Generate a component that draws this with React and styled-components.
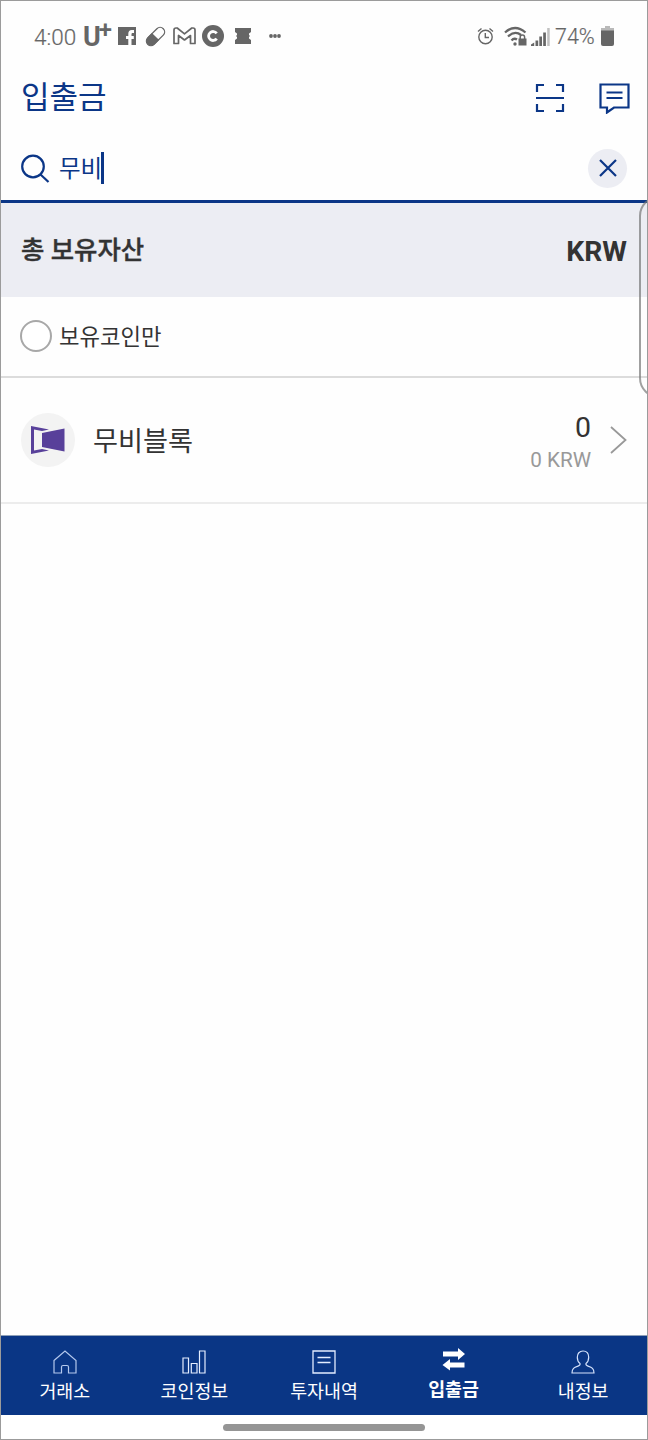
import styled, { createGlobalStyle, css } from 'styled-components';
import { useState } from 'react';

const GlobalStyle = createGlobalStyle`
  * {
    box-sizing: border-box;
  }

  body {
    margin: 0;
    background: #fff;
    font-family: Roboto, 'Noto Sans CJK KR', sans-serif;
  }
`;

const Screen = styled.div`
  position: relative;
  display: flex;
  flex-direction: column;
  width: 648px;
  height: 1440px;
  border: 1px solid #9b9b9b;
  background: #fefefe;
  color: #333;
  overflow: hidden;

  svg {
    display: block;
    flex: none;
  }
`;

const StatusBar = styled.div`
  display: flex;
  justify-content: space-between;
  height: 70px;
  padding: 0 33px 0 33px;
  color: #666;
`;

const StatusGroup = styled.div`
  display: flex;
  align-items: center;
  height: 70px;
`;

const StatusSlot = styled.span`
  display: flex;
  margin-left: ${p => p.$gap}px;
`;

const StatusText = styled.span`
  width: ${p => p.$width}px;
  font-size: ${p => p.$size || 22.5}px;
  font-weight: 300;
  line-height: 26px;
  padding-top: 2px;
  white-space: nowrap;
  -webkit-text-stroke: 0.2px currentColor;
`;

const Carrier = styled.span`
  display: flex;
  width: 29px;
  height: 30px;
  margin-left: 6px;
  font-size: 27px;
  font-weight: 700;
  line-height: 32px;

  sup {
    font-size: 24px;
    font-weight: 600;
    line-height: 18px;
    margin-left: -2px;
  }
`;

const Header = styled.header`
  display: flex;
  align-items: center;
  justify-content: space-between;
  height: 60px;
  padding: 0 17px 6px 20px;
  color: #0b3687;
`;

const Title = styled.h1`
  margin: 0;
  font-size: 31px;
  font-weight: 400;
  line-height: 44px;
`;

const HeaderIcons = styled.div`
  display: flex;
  align-items: center;
  gap: 34px;
`;

const SearchBar = styled.div`
  display: flex;
  align-items: center;
  height: 72px;
  padding: 5px 20px 0 20px;
  border-bottom: 3px solid #0b3687;
  color: #0b3687;
`;

const SearchText = styled.div`
  flex: 1;
  display: flex;
  align-items: center;
  margin-left: 9px;
  font-size: 23.5px;
  line-height: 34px;
`;

const Query = styled.span`
  padding-top: 2px;
`;

const Caret = styled.i`
  width: 3px;
  height: 32px;
  margin-left: -1px;
  background: #0b3687;
`;

const ClearButton = styled.button`
  display: flex;
  align-items: center;
  justify-content: center;
  width: 39px;
  height: 39px;
  padding: 0;
  border: 0;
  border-radius: 50%;
  background: #ecedf3;
  color: #0b3687;
`;

const Summary = styled.section`
  display: flex;
  align-items: center;
  justify-content: space-between;
  height: 94px;
  padding: 0 20px;
  background: #ecedf3;
  font-weight: 700;
`;

const SummaryLabel = styled.span`
  padding-bottom: 4px;
  font-size: 25.4px;
  font-weight: 500;
  -webkit-text-stroke: 0.4px currentColor;
`;

const SummaryUnit = styled.span`
  padding-top: 2px;
  font-size: 28.2px;
`;

const Filter = styled.label`
  display: flex;
  align-items: center;
  height: 81px;
  padding: 0 19px 2px 19px;
  gap: 7px;
  border-bottom: 2px solid #dcdcdc;
  font-size: 22.3px;
`;

const FilterText = styled.span`
  padding-bottom: 1px;
`;

const Radio = styled.span`
  width: 32px;
  height: 32px;
  border: 2px solid #a8a8a8;
  border-radius: 50%;
  background: #fff;
`;

const CoinRow = styled.div`
  display: flex;
  align-items: center;
  height: 126px;
  padding: 0 20px 0 19.5px;
  border-bottom: 2px solid #ececec;
`;

const CoinLogo = styled.div`
  display: flex;
  align-items: center;
  justify-content: center;
  width: 54px;
  height: 54px;
  border-radius: 50%;
  background: #f3f3f3;
`;

const CoinName = styled.span`
  flex: 1;
  margin-left: 18.5px;
  padding-bottom: 2px;
  font-size: 27.2px;
`;

const Amounts = styled.div`
  display: flex;
  flex-direction: column;
  align-items: flex-end;
  margin-right: 19px;
  padding-top: 6px;
`;

const Amount = styled.span`
  font-size: 28.5px;
  line-height: 33px;
`;

const Converted = styled.span`
  font-size: 20.7px;
  line-height: 32px;
  color: #999;
`;

const Content = styled.main`
  flex: 1;
`;

const TabBar = styled.nav`
  display: flex;
  height: 80px;
  margin: 0 -1px;
  border-top: 1px solid #8ea0b8;
  background: #0a3685;
`;

const Tab = styled.button`
  flex: 1;
  display: flex;
  flex-direction: column;
  align-items: center;
  gap: 4px;
  padding: 14px 0 0;
  border: 0;
  background: none;
  color: #fff;
  font-family: inherit;
  font-size: 18.4px;
  line-height: 28px;

  ${p => p.$active && css`
    padding-top: 12px;
    font-weight: 700;
  `}
`;

const HomeArea = styled.div`
  display: flex;
  justify-content: center;
  height: 24px;
  padding-top: 9px;
  background: #fff;
`;

const HomePill = styled.div`
  width: 202px;
  height: 7px;
  border-radius: 4px;
  background: #959595;
`;

/* edge panel handle, lies over the right side of the page */
const EdgeHandle = styled.div`
  position: absolute;
  top: 195px;
  right: -33px;
  width: 41px;
  height: 202px;
  border: 2px solid rgba(120, 120, 120, 0.7);
  border-radius: 20px;
`;

const FacebookIcon = () => (
  <svg width="18" height="18" viewBox="0 0 18 18" fill="currentColor">
    <path fillRule="evenodd" d="M0 0h18v18h-4.500v-6h2.300V9h-2.300V7.300c0-.8.4-1.200 1.200-1.200h1.300v-3h-2.200C11.500 3.100 10.300 4.500 10.300 6.800V9H8v3h2.300v6H0z" />
  </svg>
);

const PillIcon = () => (
  <svg width="21" height="21" viewBox="0 0 21 21">
    <g transform="rotate(-45 10.5 10.5)">
      <rect x="-0.5" y="6" width="22" height="9" rx="4.500" fill="none" stroke="currentColor" strokeWidth="1.300" />
      <path d="M10.500 5.400v10.200H4.500a5.100 5.100 0 0 1 0-10.200z" fill="currentColor" />
    </g>
  </svg>
);

const MailIcon = () => (
  <svg width="23" height="18" viewBox="0 0 23 18" fill="none" stroke="currentColor" strokeWidth="1.700" strokeLinejoin="round">
    <path d="M1 3Q1 1 3 1h1.200L11.500 6.800 18.800 1H20q2 0 2 2v13.500h-4.500V8.500L11.500 13 5.500 8.500v8H1z" />
  </svg>
);

const CoinAppIcon = () => (
  <svg width="22" height="22" viewBox="0 0 22 22">
    <circle cx="11" cy="11" r="11" fill="currentColor" />
    <path d="M14.700 8.300a4.500 4.500 0 1 0 0 5.400" fill="none" stroke="#fff" strokeWidth="2.800" />
  </svg>
);

const TicketIcon = () => (
  <svg width="16" height="16" viewBox="0 0 16 16" fill="currentColor">
    <path d="M0 0h16v4l-2 1.500v1.500l1 1-1 1v1.500l2 1.500v4H0v-4l2-1.500V9L1 8l1-1V5.500L0 4z" />
  </svg>
);

const DotsIcon = () => (
  <svg width="12" height="6" viewBox="0 0 12 6" fill="currentColor">
    <circle cx="2" cy="3" r="1.900" />
    <circle cx="6" cy="3" r="1.900" />
    <circle cx="10" cy="3" r="1.900" />
  </svg>
);

const AlarmIcon = () => (
  <svg width="17" height="18" viewBox="0 0 17 18" fill="none" stroke="currentColor" strokeWidth="1.400">
    <circle cx="8.500" cy="10" r="6.700" />
    <path d="M8.300 6v4.500h3.700M1 4.500 4.500 1.500M16 4.500 12.500 1.500" />
  </svg>
);

const WifiIcon = () => (
  <svg width="23" height="20" viewBox="0 0 23 20" fill="none" stroke="currentColor" strokeWidth="2.300">
    <path d="M1 6.500Q11 -2.500 21.500 6.500M4 10.500Q11 4 17 9M7.500 14.500Q10 11.500 13 13.500" />
    <circle cx="11" cy="18" r="1.700" fill="currentColor" stroke="none" />
    <rect x="14.500" y="12.500" width="8" height="7" fill="currentColor" stroke="none" />
    <path d="M16.200 13v-1.800a2.200 2.200 0 0 1 4.400 0V13" strokeWidth="1.500" />
  </svg>
);

const SignalIcon = () => (
  <svg width="19" height="19" viewBox="0 0 19 19" fill="currentColor">
    <path d="M0 19v-1.500l3.200-2V19zM4.500 13.500h2.700V19H4.500zM8.300 9.500H11V19H8.300zM12.200 5.500h2.700V19h-2.700z" />
    <path d="M16.200 1h2.500v18h-2.500z" opacity="0.400" />
  </svg>
);

const BatteryIcon = () => (
  <svg width="13" height="20" viewBox="0 0 13 20" fill="currentColor">
    <path d="M4 0h5v2h4v3H0V2h4z" opacity="0.450" />
    <path d="M0 4.500h13V18a2 2 0 0 1-2 2H2a2 2 0 0 1-2-2z" />
  </svg>
);

const ScanIcon = () => (
  <svg width="30" height="30" viewBox="0 0 30 30" fill="none" stroke="currentColor" strokeWidth="2.200">
    <path d="M2 9V2h7M21 2h7v7M2 21v7h7M21 28h7v-7M1 15h28" />
  </svg>
);

const ChatIcon = () => (
  <svg width="31" height="31" viewBox="0 0 31 31" fill="none" stroke="currentColor" strokeWidth="2.200">
    <path d="M1.500 1.500h28v23H15L8 29.500v-5H1.500zM7.500 9.500h16M7.500 15h16" />
  </svg>
);

const SearchIcon = () => (
  <svg width="29" height="29" viewBox="0 0 29 29" fill="none" stroke="currentColor" strokeWidth="2.200">
    <circle cx="12" cy="12.500" r="10.800" />
    <path d="M19.500 20.500 27.500 28" />
  </svg>
);

const CloseIcon = () => (
  <svg width="18" height="18" viewBox="0 0 18 18" fill="none" stroke="currentColor" strokeWidth="2.200">
    <path d="M1 1l16 16M17 1 1 17" />
  </svg>
);

const MovieBlocIcon = () => (
  <svg width="34" height="28" viewBox="0 0 34 28" fill="#58409a">
    <path fillRule="evenodd" d="M0 0 18 3.500 11 5 3 3.500v21L11 23l7 1.500L0 28z" />
    <path d="M11 7 33.500 2.500v23L11 21z" />
  </svg>
);

const ChevronIcon = () => (
  <svg width="17" height="28" viewBox="0 0 17 28" fill="none" stroke="#999" strokeWidth="1.800">
    <path d="M1 1 15.500 14 1 27" />
  </svg>
);

const HomeIcon = () => (
  <svg width="24" height="24" viewBox="0 0 24 24" fill="none" stroke="#b4c8ed" strokeWidth="1.200">
    <path d="M1 10.500 12 1l11 9.500V23h-7.500v-6q0-1.500-1.500-1.500h-4q-1.500 0-1.500 1.500v6H1z" />
  </svg>
);

const ChartIcon = () => (
  <svg width="24" height="24" viewBox="0 0 24 24" fill="none" stroke="#e4edff" strokeWidth="1.200">
    <path d="M1 8h5.500v15H1zM9.300 13.500H15V23H9.300zM17.500 1H23v22h-5.500z" />
  </svg>
);

const HistoryIcon = () => (
  <svg width="24" height="24" viewBox="0 0 24 24" fill="none" stroke="#e4edff" strokeWidth="1.300">
    <path d="M1 1h22v22H1zM5.500 7.500h13M5.500 12.500h13" />
  </svg>
);

const TransferIcon = () => (
  <svg width="24" height="24" viewBox="0 0 24 24" fill="currentColor">
    <path d="M1 3.500h15V0l7 6-7 6V8.500H1zM22.500 14.500H8V11L.5 17 8 22.500v-3h14.500z" />
  </svg>
);

const ProfileIcon = () => (
  <svg width="24" height="24" viewBox="0 0 24 24" fill="none" stroke="#d5e2fb" strokeWidth="1.200">
    <path d="M9 13.500C7 12 6.300 10 6.300 7.300 6.300 3.500 8.500 1 12 1s5.700 2.500 5.700 6.300c0 2.700-.7 4.700-2.700 6.200-.5 1.500.3 2 2 2.600 4 1.400 6 2.200 6 6.900H1c0-4.700 2-5.500 6-6.900 1.700-.6 2.500-1.100 2-2.600z" />
  </svg>
);

const tabs = [
  { label: '거래소', Icon: HomeIcon },
  { label: '코인정보', Icon: ChartIcon },
  { label: '투자내역', Icon: HistoryIcon },
  { label: '입출금', Icon: TransferIcon },
  { label: '내정보', Icon: ProfileIcon },
];

const notifications = [
  { Icon: FacebookIcon, gap: 6 },
  { Icon: PillIcon, gap: 9 },
  { Icon: MailIcon, gap: 7 },
  { Icon: CoinAppIcon, gap: 6 },
  { Icon: TicketIcon, gap: 11 },
  { Icon: DotsIcon, gap: 18 },
];

const coins = [{ name: '무비블록', amount: '0', converted: '0 KRW' }];

export default function App() {
  const [query, setQuery] = useState('무비');
  const [active, setActive] = useState('입출금');

  return (
    <>
      <GlobalStyle />
      <Screen>
        <StatusBar>
          <StatusGroup>
            <StatusText $width={43}>4:00</StatusText>
            <Carrier>U<sup>+</sup></Carrier>
            {notifications.map(({ Icon, gap }, i) => (
              <StatusSlot key={i} $gap={gap}>
                <Icon />
              </StatusSlot>
            ))}
          </StatusGroup>
          <StatusGroup>
            <AlarmIcon />
            <StatusSlot $gap={10}>
              <WifiIcon />
            </StatusSlot>
            <StatusSlot $gap={4}>
              <SignalIcon />
            </StatusSlot>
            <StatusSlot $gap={5}>
              <StatusText $width={38} $size={21.5}>74%</StatusText>
            </StatusSlot>
            <StatusSlot $gap={8}>
              <BatteryIcon />
            </StatusSlot>
          </StatusGroup>
        </StatusBar>
        <Header>
          <Title>입출금</Title>
          <HeaderIcons>
            <ScanIcon />
            <ChatIcon />
          </HeaderIcons>
        </Header>
        <SearchBar>
          <SearchIcon />
          <SearchText>
            <Query>{query}</Query>
            <Caret />
          </SearchText>
          <ClearButton onClick={() => setQuery('')}>
            <CloseIcon />
          </ClearButton>
        </SearchBar>
        <Summary>
          <SummaryLabel>총 보유자산</SummaryLabel>
          <SummaryUnit>KRW</SummaryUnit>
        </Summary>
        <Content>
          <Filter>
            <Radio />
            <FilterText>보유코인만</FilterText>
          </Filter>
          {coins.map(coin => (
            <CoinRow key={coin.name}>
              <CoinLogo>
                <MovieBlocIcon />
              </CoinLogo>
              <CoinName>{coin.name}</CoinName>
              <Amounts>
                <Amount>{coin.amount}</Amount>
                <Converted>{coin.converted}</Converted>
              </Amounts>
              <ChevronIcon />
            </CoinRow>
          ))}
        </Content>
        <TabBar>
          {tabs.map(({ label, Icon }) => (
            <Tab key={label} $active={label === active} onClick={() => setActive(label)}>
              <Icon />
              {label}
            </Tab>
          ))}
        </TabBar>
        <HomeArea>
          <HomePill />
        </HomeArea>
        <EdgeHandle />
      </Screen>
    </>
  );
}
